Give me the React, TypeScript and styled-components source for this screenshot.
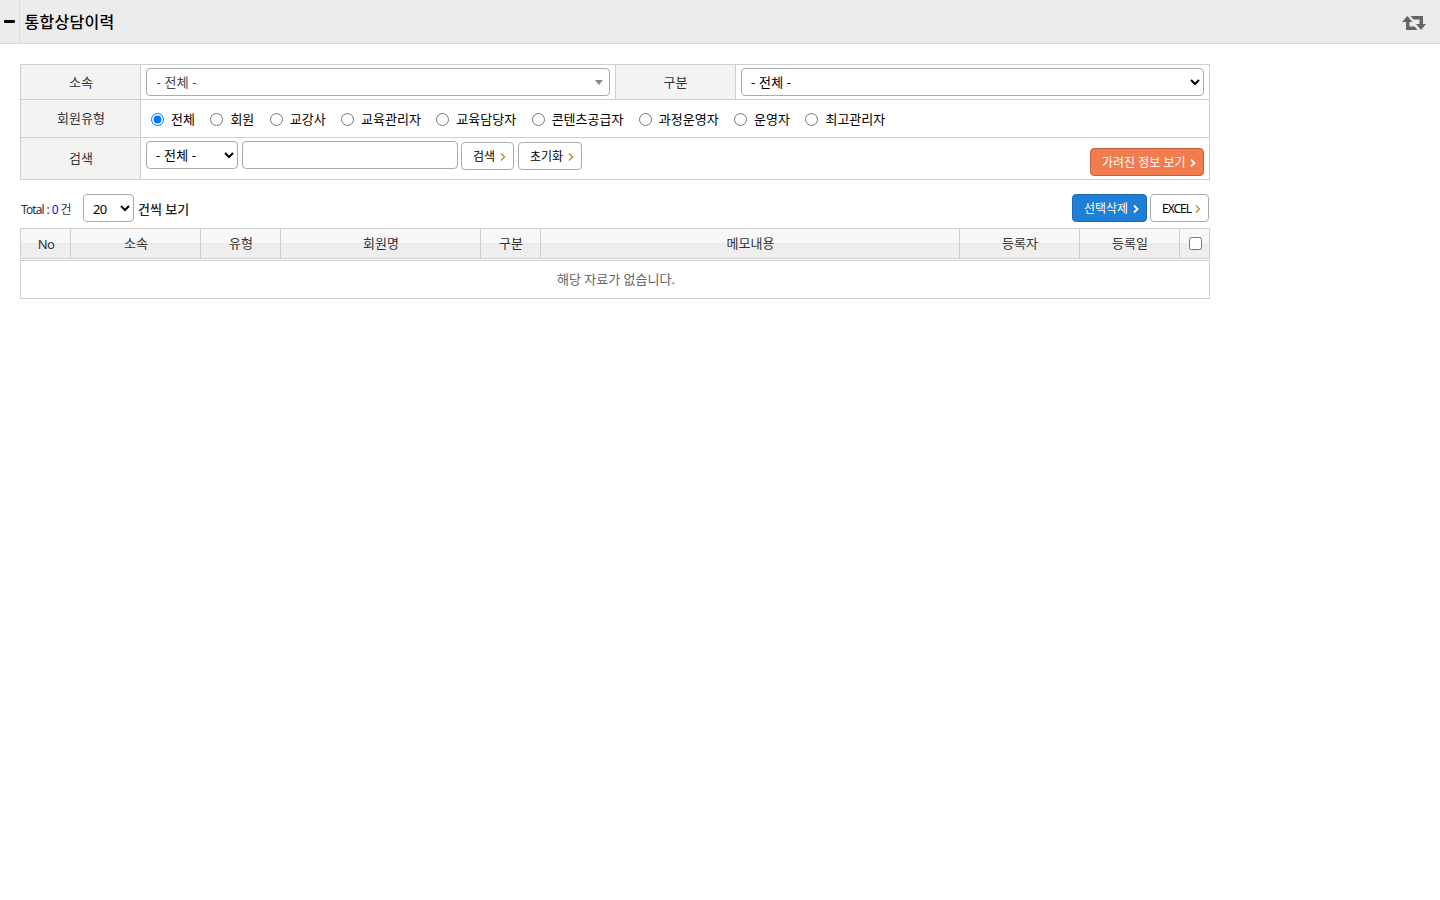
import React from "react";
import styled, { createGlobalStyle, css } from "styled-components";

const Global = createGlobalStyle`
  *, *::before, *::after { box-sizing: border-box; }
  body { margin: 0; background: #fff; color: #333; }
  body, select, input, button {
    font-family: "Noto Sans", "Noto Sans CJK KR", sans-serif;
    font-size: 13px;
    line-height: 18px;
  }
`;

const Header = styled.header`
  display: flex;
  align-items: stretch;
  height: 44px;
  background: #ececec;
  border-bottom: 1px solid #dadada;
`;
const Toggle = styled.div`
  width: 20px;
  padding: 20px 0 0 4px;
  border-right: 1px solid #dcdcdc;
`;
const Minus = styled.div`
  width: 11px;
  height: 3px;
  border-radius: 1px;
  background: #000;
`;
const Title = styled.h1`
  flex: 1;
  margin: 0;
  padding-left: 4.5px;
  font-size: 16px;
  line-height: 45px;
  font-weight: 500;
  letter-spacing: 0.3px;
  color: #000;
`;
const RefreshIcon = styled.svg`
  width: 24px;
  height: 16px;
  margin: 15px 14px 0 0;
  fill: #666;
`;
const Content = styled.main`
  width: 1190px;
  margin: 20px 0 0 20px;
`;
const Form = styled.div`
  border: 1px solid #cfcfcf;
  border-bottom: 0;
`;
const FormRow = styled.div<{ $h: number }>`
  display: flex;
  height: ${(p) => p.$h}px;
  border-bottom: 1px solid #cfcfcf;
`;
const Label = styled.div<{ $inner?: boolean }>`
  display: flex;
  flex: none;
  align-items: center;
  justify-content: center;
  width: ${(p) => (p.$inner ? 121 : 120)}px;
  padding: 0 0 1px ${(p) => (p.$inner ? 0 : 1)}px;
  background: #f3f3f3;
  border-right: 1px solid #cfcfcf;
  border-left: ${(p) => (p.$inner ? "1px solid #cfcfcf" : "0")};
`;
const Field = styled.div<{ $w?: number }>`
  display: flex;
  flex: ${(p) => (p.$w ? "none" : "1")};
  width: ${(p) => (p.$w ? p.$w + "px" : "auto")};
  align-items: flex-start;
  padding: 3px 5px 0;
`;
const box = css`
  height: 28px;
  border: 1px solid #aaa;
  border-radius: 4px;
  background: #fff;
`;
const Select = styled.select<{ $w: number; $spacing?: number; $top?: number }>`
  ${box}
  width: ${(p) => p.$w}px;
  padding: ${(p) => p.$top ?? 0}px 0 ${(p) => (p.$top ? 0 : 1)}px 5px;
  letter-spacing: ${(p) => p.$spacing ?? 0.2}px;
  color: #000;
`;
const Combo = styled.div`
  ${box}
  display: flex;
  flex: 1;
  align-items: center;
  justify-content: space-between;
  padding: 0 6px 0 9.5px;
  letter-spacing: 0.2px;
  color: #444;
`;
const Caret = styled.i`
  border: 4px solid transparent;
  border-top: 5px solid #888;
  border-bottom: 0;
`;
const TextInput = styled.input`
  ${box}
  width: 216px;
  margin: 0 3px 0 4px;
`;
const Radios = styled.div`
  display: flex;
  align-items: center;
  gap: 15.46px;
  padding: 0 0 0 10px;
`;
const Radio = styled.label`
  display: flex;
  align-items: center;
  color: #000;
  white-space: nowrap;
  input { width: 13px; height: 13px; margin: 1px 7px 0 0; }
`;
const tones = {
  plain: { bg: "#fff", line: "#aaa", text: "#000", arrow: "#b0902a" },
  orange: { bg: "#f17c50", line: "#c9623c", text: "#fff", arrow: "#fff" },
  blue: { bg: "#1f7ed5", line: "#1b6cb6", text: "#fff", arrow: "#fff" },
};
type Tone = keyof typeof tones;
const ButtonBox = styled.button<{ $w: number; $tone: Tone; $spacing: number }>`
  ${box}
  display: flex;
  flex: none;
  align-items: center;
  justify-content: space-between;
  width: ${(p) => p.$w}px;
  padding: 1px 7px 0 11px;
  font-size: 12px;
  letter-spacing: ${(p) => p.$spacing}px;
  white-space: nowrap;
  color: ${(p) => tones[p.$tone].text};
  background: ${(p) => tones[p.$tone].bg};
  border-color: ${(p) => tones[p.$tone].line};
  span { padding-top: 1px; }
  svg {
    flex: none;
    width: 6px;
    height: 8px;
    fill: none;
    stroke: ${(p) => tones[p.$tone].arrow};
    stroke-width: ${(p) => (p.$tone === "plain" ? 1.4 : 1.8)};
  }
`;
const Spot = styled.div<{ $top?: number; $left?: number; $push?: boolean }>`
  margin: ${(p) => p.$top || 0}px 0 0 ${(p) => (p.$push ? "auto" : (p.$left || 0) + "px")};
`;
const Toolbar = styled.div`
  display: flex;
  align-items: center;
  height: 28px;
  margin: 14px 0 6px;
  padding: 0 1px;
`;
const Total = styled.span`
  width: 62px;
  padding-top: 3px;
  font-size: 12px;
  letter-spacing: -0.9px;
  word-spacing: 0.6px;
  white-space: nowrap;
  b { font-weight: 400; color: #20f; }
`;
const PerPage = styled.span`
  flex: 1;
  padding: 1px 0 0 4px;
  font-weight: 500;
  color: #222;
`;
const HeadRow = styled.div`
  display: grid;
  grid-template-columns: 50px 130px 80px 200px 60px 419px 120px 100px 30px;
  height: 31px;
  border: 1px solid #cfcfcf;
  border-right: 0;
  background: linear-gradient(#f8f8f8 0 14px, #ececec 14px, #f0f0f0);
`;
const HeadCell = styled.div`
  display: flex;
  align-items: center;
  justify-content: center;
  padding: 0 0 1px 1px;
  border-right: 1px solid #cfcfcf;
  &:first-child { padding: 1px 0 0 1px; letter-spacing: -0.6px; }
  input { width: 13px; height: 13px; margin: 1px 0 0; }
`;
const Empty = styled.div`
  height: 39px;
  margin-top: 1px;
  padding-left: 2px;
  border: 1px solid #cfcfcf;
  line-height: 37px;
  text-align: center;
  color: #666;
`;

function Button({ w, tone = "plain", spacing = 0, children }: { w: number; tone?: Tone; spacing?: number; children: string }) {
  return (
    <ButtonBox $w={w} $tone={tone} $spacing={spacing}>
      <span>{children}</span>
      <svg viewBox="0 0 6 8"><path d="M1 .5 4.5 4 1 7.5" /></svg>
    </ButtonBox>
  );
}

const memberTypes = ["전체", "회원", "교강사", "교육관리자", "교육담당자", "콘텐츠공급자", "과정운영자", "운영자", "최고관리자"];
const columns = ["No", "소속", "유형", "회원명", "구분", "메모내용", "등록자", "등록일"];

export default function App() {
  return (
    <>
      <Global />
      <Header>
        <Toggle><Minus /></Toggle>
        <Title>통합상담이력</Title>
        <RefreshIcon viewBox="0 0 24 16">
          <path d="M5.4 1 10.5 7H7.5v4.5h5.3L15.5 15H4V7H0z" />
          <path d="M19 15 14 9h3.5V4.5h-6L8.5 1H21v8h3z" />
        </RefreshIcon>
      </Header>
      <Content>
        <Form>
          <FormRow $h={35}>
            <Label>소속</Label>
            <Field $w={474}><Combo>- 전체 -<Caret /></Combo></Field>
            <Label $inner>구분</Label>
            <Field><Select $w={463}><option>- 전체 -</option></Select></Field>
          </FormRow>
          <FormRow $h={38}>
            <Label>회원유형</Label>
            <Radios>
              {memberTypes.map((m, i) => (
                <Radio key={m}><input type="radio" name="type" defaultChecked={i === 0} />{m}</Radio>
              ))}
            </Radios>
          </FormRow>
          <FormRow $h={42}>
            <Label>검색</Label>
            <Field>
              <Select $w={92}><option>- 전체 -</option></Select>
              <TextInput />
              <Spot $top={1}><Button w={53}>검색</Button></Spot>
              <Spot $top={1} $left={4}><Button w={64}>초기화</Button></Spot>
              <Spot $top={7} $push><Button w={114} tone="orange">가려진 정보 보기</Button></Spot>
            </Field>
          </FormRow>
        </Form>
        <Toolbar>
          <Total>Total : <b>0</b> 건</Total>
          <Select $w={51} $spacing={-0.8} $top={1}><option>20</option></Select>
          <PerPage>건씩 보기</PerPage>
          <Button w={75} tone="blue">선택삭제</Button>
          <Spot $left={3}><Button w={59} spacing={-1}>EXCEL</Button></Spot>
        </Toolbar>
        <HeadRow>
          {columns.map((c) => <HeadCell key={c}>{c}</HeadCell>)}
          <HeadCell><input type="checkbox" /></HeadCell>
        </HeadRow>
        <Empty>해당 자료가 없습니다.</Empty>
      </Content>
    </>
  );
}
